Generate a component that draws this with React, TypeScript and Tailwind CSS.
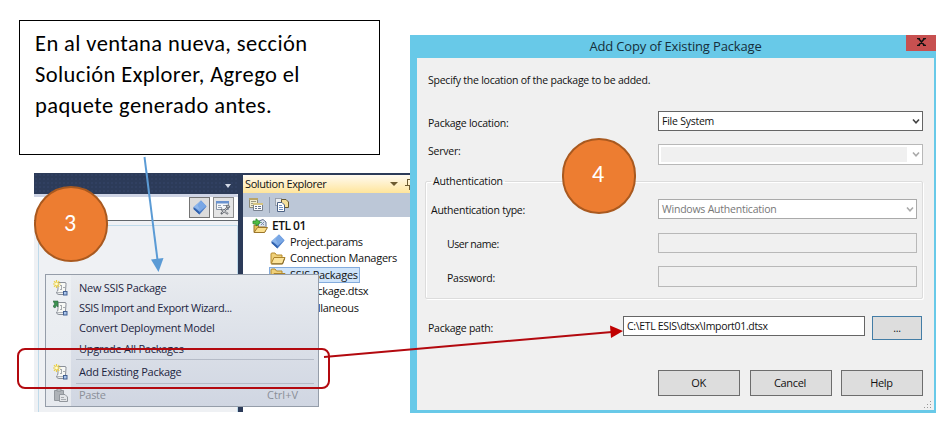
import type { ReactNode } from "react";

const uiFont = "font-['Open_Sans','Noto_Sans',sans-serif]";

function NewPackageIcon({ kind }: { kind: "new" | "import" }) {
  return (
    <svg width="16" height="17" viewBox="0 0 16 17" fill="none">
      <path d="M4.500 2.500H12.500V12.500H5Z" fill="#f7f8f5" />
      <path d="M5 2.500H12Q13.500 2.500 13 4.500L12.500 11M5 3V9Q5 11.500 3.500 12Q3.500 14.500 6 14.500H10" stroke="#8b9098" />
      <path d="M4 12.500H10" stroke="#b1b5b9" />
      <path d="M7 5.500H9M10 7.500H12M7 9.500H9M8.500 5.500V9" stroke="#a5aaae" />
      <rect x="10.500" y="11.500" width="3.500" height="3.500" fill="#a9c4ea" stroke="#415f91" />
      {kind === "new" ? (
        <>
          <path d="M3.500 0V8M0 4H7.500M1 1.200L6.200 6.800M6.200 1.200L1 6.800" stroke="#ecd044" strokeWidth="1.200" />
          <circle cx="3.500" cy="4" r="1.400" fill="#fffbd1" />
        </>
      ) : (
        <path d="M0 1L5 1L5 7L3.600 5.600L2 8L0 6.500L1.700 4Z" fill="#3c9150" stroke="#2c6540" strokeWidth=".6" />
      )}
    </svg>
  );
}

function PasteIcon() {
  return (
    <svg width="16" height="15" viewBox="0 0 16 15" fill="none">
      <path d="M1.500 2.500H10.500V12.500H1.500Z" fill="#aeb2b7" stroke="#92979d" />
      <path d="M4 3V1H8V3Z" fill="#dadde0" stroke="#8c9197" />
      <path d="M6.500 6.500H12L14.500 9V13.500H6.500Z" fill="#e3e5e8" stroke="#92979d" />
      <path d="M8 9.500H11M8 11.500H13" stroke="#a7abb0" />
    </svg>
  );
}

function DiamondIcon() {
  return (
    <svg width="14" height="15" viewBox="0 0 14 15">
      <path d="M8 .5L13.500 6.500L6.500 14.500L.5 9Z" fill="#4779c5" />
      <path d="M8 .5L13.500 6L6.500 12L.5 7Z" fill="#79a7e5" />
      <path d="M8 .5L4.500 5L7 10L.5 7Z" fill="#a2c5f1" opacity=".5" />
      <path d="M.5 7L6.500 12V14.500L.5 9Z" fill="#2f60ac" />
    </svg>
  );
}

function FolderIcon() {
  return (
    <svg width="16" height="13" viewBox="0 0 16 13">
      <path d="M1 11V2Q1 1 2 1H5L6.500 3H12V5" fill="#efd079" stroke="#b58a2c" />
      <path d="M1 12L4 5.500H15L12.500 12Z" fill="#fbe39a" stroke="#ad842b" />
      <path d="M2 11.800H12.500L14.500 6.500" fill="none" stroke="#755c24" strokeWidth=".8" />
    </svg>
  );
}

function ProjectIcon() {
  return (
    <svg width="17" height="16" viewBox="0 0 17 16">
      <path d="M7 3L11 1.500L14 4V10H6Z" fill="#dbe3ef" stroke="#61708e" />
      <path d="M9 4L12 7M12 4L9 7" stroke="#7a8da9" />
      <path d="M2 14V7L5 7L7 9H13V14Z" fill="#e8be57" stroke="#9c772c" />
      <path d="M2 14.500L5.500 9.500H15.500L12.500 14.500Z" fill="#fbdf8d" stroke="#9b762c" />
      <path d="M1 3H4V.8L8.500 4.400L4 8V5.800H1Z" fill="#4fbd43" stroke="#26852b" strokeWidth=".8" />
    </svg>
  );
}

function PropertiesIcon() {
  return (
    <svg width="17" height="16" viewBox="0 0 17 16" fill="none">
      <path d="M1.500 1.500H9.500V10.500H1.500Z" fill="#f0ecd0" stroke="#8f8b78" />
      <path d="M1 1H10V3H1Z" fill="#b9a567" />
      <path d="M3 4.500H8M3 6.500H6M3 8.500H5" stroke="#999780" />
      <path d="M5.500 6.500H14.500V13.500H5.500Z" fill="#fafbfc" stroke="#77808e" />
      <path d="M5 6H15V8H5Z" fill="#d5c382" />
      <path d="M7 9.500H9M10 9.500H13M7 11.500H9M10 11.500H13" stroke="#66738a" />
    </svg>
  );
}

function ShowFilesIcon() {
  return (
    <svg width="17" height="16" viewBox="0 0 17 16" fill="none">
      <path d="M1.500 1.500H7.500V8.500H1.500Z" fill="#e8ebef" stroke="#626a78" strokeDasharray="1 1" />
      <path d="M7.500 2.500H12L14.500 5V10.500H7.500Z" fill="#f4df9b" stroke="#665831" />
      <path d="M3.500 5.500H8L10.500 8V14.500H3.500Z" fill="#fff" stroke="#4d6284" />
      <path d="M5 8.500H8M5 10.500H9M5 12.500H9" stroke="#6f91c2" />
    </svg>
  );
}

function ToolboxIcon() {
  return (
    <svg width="17" height="17" viewBox="0 0 17 17" fill="none">
      <path d="M1.500 2.500H13.500V10.500H1.500Z" fill="#f5f7f9" stroke="#8795a8" />
      <path d="M1 2H14V4.500H1Z" fill="#6992cf" />
      <path d="M3 6.500H6M3 8.500H7M8 6.500H11" stroke="#97a4b4" />
      <path d="M6 10L13 15M14 7L6 15" stroke="#656970" strokeWidth="2" />
      <path d="M7 10.500L12.500 14.500M13 8L7 14" stroke="#dfe1e3" strokeWidth=".8" />
      <path d="M11 6.500Q14 5 15 8L12.500 9Z" fill="#b8bdc2" stroke="#6d7279" />
    </svg>
  );
}

function StepBadge({ n, className }: { n: number; className: string }) {
  return (
    <div
      className={`absolute flex h-[76px] w-[74px] items-center justify-center rounded-full border-2 border-[#a9591f] bg-[#ed7d31] pr-[2px] pb-[3px] font-[Carlito,Calibri,sans-serif] text-[24px] leading-none text-white ${className}`}
    >
      {n}
    </div>
  );
}

function MenuItem({ icon, className, children }: { icon?: ReactNode; className: string; children: ReactNode }) {
  return (
    <div className={`flex items-center whitespace-nowrap ${className}`}>
      <div className="flex w-[33px] shrink-0 justify-start pl-[7px]">{icon}</div>
      {children}
    </div>
  );
}

function ContextMenu() {
  return (
    <div className="absolute top-[274px] left-[45px] h-[133px] w-[274px] border border-[#959da9] bg-linear-to-b from-[#e8ebef] to-[#d0d6e2] pt-[3px] text-[11px] text-[#1d2541]">
      <div className="absolute inset-y-0 left-0 w-[25px] bg-linear-to-b from-[#edf0f3] to-[#e6e9ee]" />
      <div className="relative flex flex-col">
        <MenuItem icon={<NewPackageIcon kind="new" />} className="h-5 tracking-[-0.28px]">New SSIS Package</MenuItem>
        <MenuItem icon={<NewPackageIcon kind="import" />} className="h-5 tracking-[-0.38px]">SSIS Import and Export Wizard...</MenuItem>
        <MenuItem className="h-[21px] tracking-[-0.23px]">Convert Deployment Model</MenuItem>
        <MenuItem className="h-5 tracking-[-0.25px]">Upgrade All Packages</MenuItem>
        <div className="mr-1 ml-[30px] border-t border-[#b5bbc7]" />
        <MenuItem icon={<NewPackageIcon kind="new" />} className="h-[23px] pt-px tracking-[-0.25px]">Add Existing Package</MenuItem>
        <div className="mr-1 ml-[30px] border-t border-[#b5bbc7]" />
        <MenuItem icon={<PasteIcon />} className="h-[23px] text-[#8a8f98]">
          <span className="tracking-[-0.3px]">Paste</span>
          <span className="mr-5 ml-auto">Ctrl+V</span>
        </MenuItem>
      </div>
    </div>
  );
}

function TreeRow({ icon, className, children }: { icon?: ReactNode; className: string; children: ReactNode }) {
  return (
    <div className={`flex h-[16.500px] items-center whitespace-nowrap ${className}`}>
      {icon}
      {children}
    </div>
  );
}

function SolutionExplorer() {
  return (
    <div className="flex w-[167px] flex-col overflow-hidden bg-white text-[11px] text-[#111]">
      <div className="h-[2px] bg-[#2c3b59]" />
      <div className="flex h-[18px] items-center rounded-tl-[3px] bg-linear-to-b from-[#fffaf0] to-[#ffe59a] pl-[2px]">
        <span className="text-[11px] tracking-[-0.4px] whitespace-nowrap">Solution Explorer</span>
        <svg className="ml-auto shrink-0" width="20" height="12" viewBox="0 0 20 12" fill="none">
          <path d="M0 4H8L4 8Z" fill="#6d5b31" />
          <path d="M17 1.500H20M17.500 1V7M15 7.500H20M19.500 8V12" stroke="#6d5b31" />
        </svg>
      </div>
      <div className="flex h-6 items-center bg-[#bcc7d7] pl-[5px]">
        <PropertiesIcon />
        <div className="mx-1 h-4 border-l border-[#909caf]" />
        <ShowFilesIcon />
      </div>
      <div className="flex flex-col">
        <TreeRow icon={<ProjectIcon />} className="gap-[3px] pt-px pl-[9px] text-[12px] font-semibold tracking-[-0.5px]">ETL 01</TreeRow>
        <TreeRow icon={<DiamondIcon />} className="gap-[5px] pl-7 tracking-[-0.35px]">Project.params</TreeRow>
        <TreeRow icon={<FolderIcon />} className="gap-1 pl-[27px] tracking-[-0.27px]">Connection Managers</TreeRow>
        <TreeRow icon={<FolderIcon />} className="ml-[26px] w-[91px] gap-1 border border-[#84acdd] bg-[#cfe4fa] tracking-[-0.27px]">SSIS Packages</TreeRow>
        <TreeRow className="pl-[62px] tracking-[-0.27px]">Package.dtsx</TreeRow>
        <TreeRow className="pl-[47px] tracking-[-0.3px]">Miscellaneous</TreeRow>
      </div>
    </div>
  );
}

function StudioWindow() {
  return (
    <div className="mt-[18px] ml-[34px] flex h-[239px] w-[376px]">
      <div className="flex w-[204px] flex-col bg-[#eff1f4]">
        <div className="flex h-[21px] items-center justify-end bg-[#2c3b59] bg-[radial-gradient(#35456a_0.6px,transparent_0.8px)] bg-[size:4px_4px] pt-1 pr-[7px]">
          <div className="border-x-[3px] border-t-[4px] border-x-transparent border-t-[#d2d9e6]" />
        </div>
        <div className="h-[3px] rounded-tr bg-[#ced4e5]" />
        <div className="flex h-6 items-start justify-end gap-[3px] border-b border-[#62676c] bg-white pr-1">
          <div className="flex h-[21px] w-[21px] items-center justify-center border border-[#747474] bg-[#dcdcdc]"><DiamondIcon /></div>
          <div className="flex h-[21px] w-[21px] items-center justify-center border border-[#8c8c8c] bg-[#e4e4e4]"><ToolboxIcon /></div>
        </div>
        <div className="mt-1 ml-1 flex-1 border-t border-r border-l border-[#bfdaea] bg-[#eff1f4]" />
      </div>
      <div className="w-[5px] bg-[#2c3b59]" />
      <SolutionExplorer />
    </div>
  );
}

function Chevron({ className }: { className: string }) {
  return (
    <svg className={className} width="8" height="7" viewBox="0 0 8 7" fill="none" stroke="currentColor" strokeWidth="1.600">
      <path d="M1 1.500L4 4.800L7 1.500" />
    </svg>
  );
}

function DialogButton({ children }: { children: ReactNode }) {
  return (
    <button className="flex h-[26px] w-[82px] items-center justify-center border border-[#6d6d6d] bg-[#dddddd] pr-px text-[11px] tracking-[-0.3px]">
      {children}
    </button>
  );
}

function PackageDialog() {
  return (
    <div className="mt-[35px] flex h-[378px] w-[526px] flex-col border-r-2 border-b-[3px] border-l-[7px] border-[#68c9e8] bg-[#f0f0f0] text-[10.5px] tracking-[-0.24px] text-[#111]">
      <div className="-mr-[2px] flex h-[23px] bg-[#68c9e8] pl-[93px]">
        <div className="flex-1 text-center text-[13px] leading-[22px] tracking-[-0.15px] text-[#162f3b]">Add Copy of Existing Package</div>
        <div className="ml-[65px] flex h-4 w-[30px] items-center justify-center bg-[#c75050] pb-[3px]">
          <svg width="9" height="8" viewBox="0 0 9 8"><path d="M0 .5H3M6 .5H9M0 7.500H3M6 7.500H9M1.500 .5L7.500 7.500M7.500 .5L1.500 7.500" stroke="#111" strokeWidth="1.600" /></svg>
        </div>
      </div>
      <div className="mt-3 ml-[11px] h-5 leading-5">Specify the location of the package to be added.</div>
      <div className="mt-[21px] mr-[11px] ml-[11px] flex h-5 justify-between">
        <span className="leading-6">Package location:</span>
        <div className="flex w-[265px] items-center border border-[#656565] bg-white pt-px pr-[2px] pl-[3px]">
          File System
          <Chevron className="ml-auto text-[#444]" />
        </div>
      </div>
      <div className="mt-[13px] mr-[11px] ml-[11px] flex h-[21px] justify-between">
        <span className="leading-[14px]">Server:</span>
        <div className="flex w-[265px] items-center border border-[#b8b8b8] bg-white pr-[2px] pl-[2px]">
          <div className="h-[15px] w-[246px] bg-[#f0f0f0]" />
          <Chevron className="ml-auto text-[#aaa]" />
        </div>
      </div>
      <fieldset className="mt-[7px] mr-[11px] ml-2 flex h-[127px] flex-col rounded-[2px] border border-[#dcdcdc] shadow-[inset_1px_1px_white,1px_1px_white]">
        <legend className="ml-[5px] h-[18px] px-[2px] leading-[18px] tracking-[-0.15px]">Authentication</legend>
        <div className="mt-[9px] mr-[5px] ml-[5px] flex h-5 justify-between">
          <span className="leading-[22px]">Authentication type:</span>
          <div className="flex w-[259px] items-center border border-[#aaa] bg-white pt-px pr-[2px] pl-[3px] tracking-[-0.22px] text-[#777]">
            Windows Authentication
            <Chevron className="ml-auto text-[#aaa]" />
          </div>
        </div>
        <div className="mt-[14px] mr-[5px] ml-[21px] flex h-5 justify-between">
          <span className="leading-[22px] tracking-[-0.45px]">User name:</span>
          <div className="w-[259px] border border-[#b8b8b8]" />
        </div>
        <div className="mt-[13px] mr-[5px] ml-[21px] flex h-[21px] justify-between">
          <span className="leading-[24px]">Password:</span>
          <div className="w-[259px] border border-[#b8b8b8]" />
        </div>
      </fieldset>
      <div className="mt-[17px] mr-3 ml-[11px] flex h-6 items-start">
        <span className="w-[195px] leading-6">Package path:</span>
        <div className="h-5 w-[242px] border border-[#656565] bg-white pl-[3px] leading-[18px] tracking-[-0.33px]">C:\ETL ESIS\dtsx\Import01.dtsx</div>
        <button className="ml-[7px] h-6 w-[50px] border border-[#437da6] bg-[#dddddd] leading-none">...</button>
      </div>
      <div className="mt-[30px] mr-[11px] flex justify-end gap-[9.500px]">
        <DialogButton>OK</DialogButton>
        <DialogButton>Cancel</DialogButton>
        <DialogButton>Help</DialogButton>
      </div>
      <svg className="mt-auto mr-[2px] mb-[1px] self-end" width="8" height="8" viewBox="0 0 8 8">
        <path d="M6 0h1v1H6zM3 3h1v1H3zM6 3h1v1H6zM0 6h1v1H0zM3 6h1v1H3zM6 6h1v1H6z" fill="#999" />
      </svg>
    </div>
  );
}

export default function App() {
  return (
    <main className={`relative flex h-[428px] w-[945px] overflow-hidden bg-white ${uiFont}`}>
      <div className="flex w-[410px] shrink-0 flex-col">
        <p className="mt-5 ml-[19px] h-[135px] w-[361px] border border-black pt-[7px] pl-[15px] font-[Carlito,Calibri,sans-serif] text-[22.5px] leading-[31px] tracking-[0.4px] whitespace-nowrap text-black">
          En al ventana nueva, sección<br />
          Solución Explorer, Agrego el<br />
          paquete generado antes.
        </p>
        <StudioWindow />
      </div>
      <PackageDialog />
      <ContextMenu />
      <StepBadge n={3} className="top-[186px] left-[34px]" />
      <StepBadge n={4} className="top-[137.5px] left-[562px]" />
      <div className="absolute top-[348px] left-[17px] h-[41px] w-[313px] rounded-lg border-2 border-[#b3090f]" />
      <svg className="pointer-events-none absolute inset-0" width="945" height="428" viewBox="0 0 945 428">
        <path d="M144.500 157L157.500 260" stroke="#5b9bd5" strokeWidth="2" />
        <path d="M151 259.500L163.500 258L158.500 272Z" fill="#5b9bd5" />
        <path d="M324 357L612 332" stroke="#b3090f" strokeWidth="2" />
        <path d="M610 325.500L623 331L611 338Z" fill="#c00000" />
      </svg>
    </main>
  );
}
